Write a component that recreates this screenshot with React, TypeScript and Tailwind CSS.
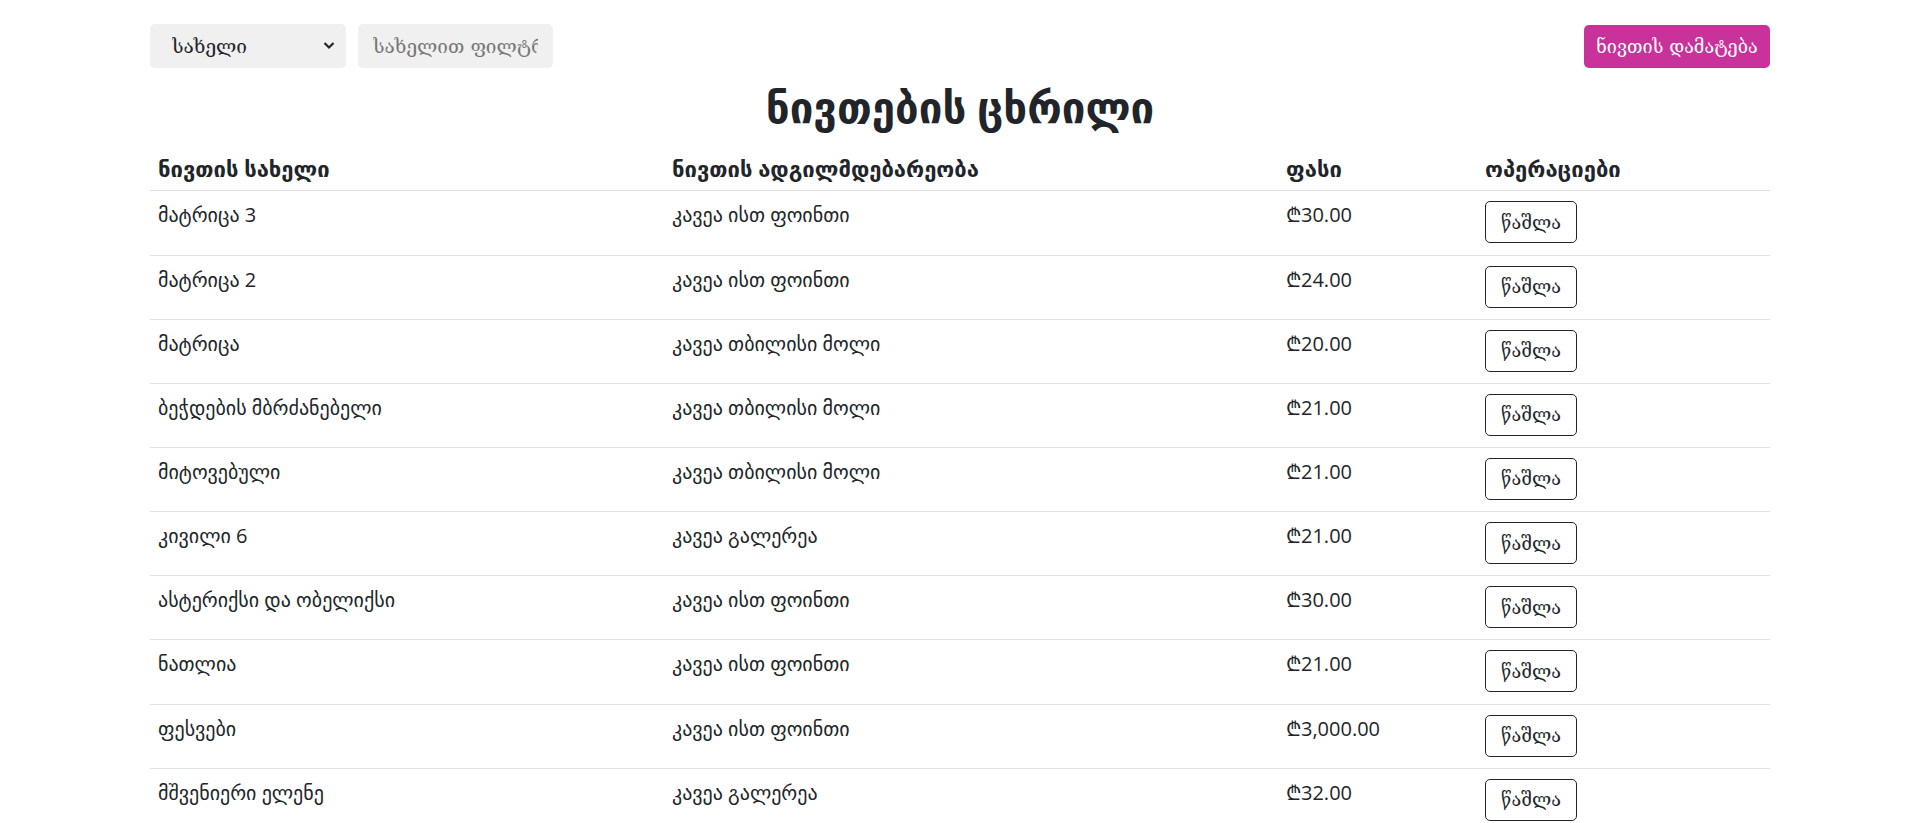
import React from "react";

const rows = [
  { name: "მატრიცა 3", place: "კავეა ისთ ფოინთი", price: "₾30.00" },
  { name: "მატრიცა 2", place: "კავეა ისთ ფოინთი", price: "₾24.00" },
  { name: "მატრიცა", place: "კავეა თბილისი მოლი", price: "₾20.00" },
  { name: "ბეჭდების მბრძანებელი", place: "კავეა თბილისი მოლი", price: "₾21.00" },
  { name: "მიტოვებული", place: "კავეა თბილისი მოლი", price: "₾21.00" },
  { name: "კივილი 6", place: "კავეა გალერეა", price: "₾21.00" },
  { name: "ასტერიქსი და ობელიქსი", place: "კავეა ისთ ფოინთი", price: "₾30.00" },
  { name: "ნათლია", place: "კავეა ისთ ფოინთი", price: "₾21.00" },
  { name: "ფესვები", place: "კავეა ისთ ფოინთი", price: "₾3,000.00" },
  { name: "მშვენიერი ელენე", place: "კავეა გალერეა", price: "₾32.00" },
];

// form controls keep the system (serif-looking) georgian font
const controlFont = "font-['DejaVu_Serif','Liberation_Serif',serif]";

function Toolbar() {
  return (
    <div className="flex items-center justify-between">
      <div className="flex items-center gap-3">
        <div className="relative w-[196px] h-[44px]">
          <select
            className={`appearance-none w-full h-full rounded-[5px] bg-[#f0f0f0] pl-[22px] pr-8 text-[19px] text-[#212529] outline-none ${controlFont}`}
          >
            <option>სახელი</option>
            <option>ფასი</option>
          </select>
          <svg
            className="absolute right-[11px] top-[17px] pointer-events-none"
            width="12"
            height="9"
            viewBox="0 0 12 9"
            fill="none"
          >
            <path d="M1.5 2l4.5 4.5L10.5 2" stroke="#212529" strokeWidth="2.2" />
          </svg>
        </div>
        <input
          className={`w-[195px] h-[44px] rounded-[5px] bg-[#f0f0f0] px-[15px] text-[19px] text-[#212529] placeholder:text-[#777] outline-none ${controlFont}`}
          placeholder="სახელით ფილტრი"
        />
      </div>
      <button
        className={`h-[43px] w-[186px] rounded-[5px] bg-[#c8329a] text-white text-[18px] ${controlFont}`}
      >
        ნივთის დამატება
      </button>
    </div>
  );
}

function ItemsTable() {
  const th = "text-left font-bold px-2 py-2 leading-[27px] text-[22px]";
  const td = "align-top px-2 pt-[10px] pb-[11.15px] leading-[27px]";
  return (
    <table className="w-[1620px] table-fixed border-collapse text-[20px] text-[#212529]">
      <thead>
        <tr className="border-b border-[#dee2e6]">
          <th className={`${th} w-[514px]`}>ნივთის სახელი</th>
          <th className={`${th} w-[614px]`}>ნივთის ადგილმდებარეობა</th>
          <th className={`${th} w-[199px]`}>ფასი</th>
          <th className={`${th} w-[293px]`}>ოპერაციები</th>
        </tr>
      </thead>
      <tbody>
        {rows.map((r, i) => (
          <tr key={i} className="border-b border-[#dee2e6]">
            <td className={td}>{r.name}</td>
            <td className={td}>{r.place}</td>
            <td className={td}>{r.price}</td>
            <td className="align-top px-2 pt-[10px] pb-[11.15px]">
              <button
                className={`h-[42px] w-[92px] rounded-[5px] border border-[#212529] bg-white text-[18px] text-[#212529] ${controlFont}`}
              >
                წაშლა
              </button>
            </td>
          </tr>
        ))}
      </tbody>
    </table>
  );
}

export default function App() {
  return (
    <div className="min-h-screen bg-white font-['Segoe_UI','Open_Sans','DejaVu_Sans',sans-serif]">
      <div className="mx-[150px] pt-6">
        <Toolbar />
        <h1 className="text-center text-[42px] font-semibold leading-[1.2] text-[#212529] mt-[14px] mb-[15px]">
          ნივთების ცხრილი
        </h1>
        <ItemsTable />
      </div>
    </div>
  );
}
